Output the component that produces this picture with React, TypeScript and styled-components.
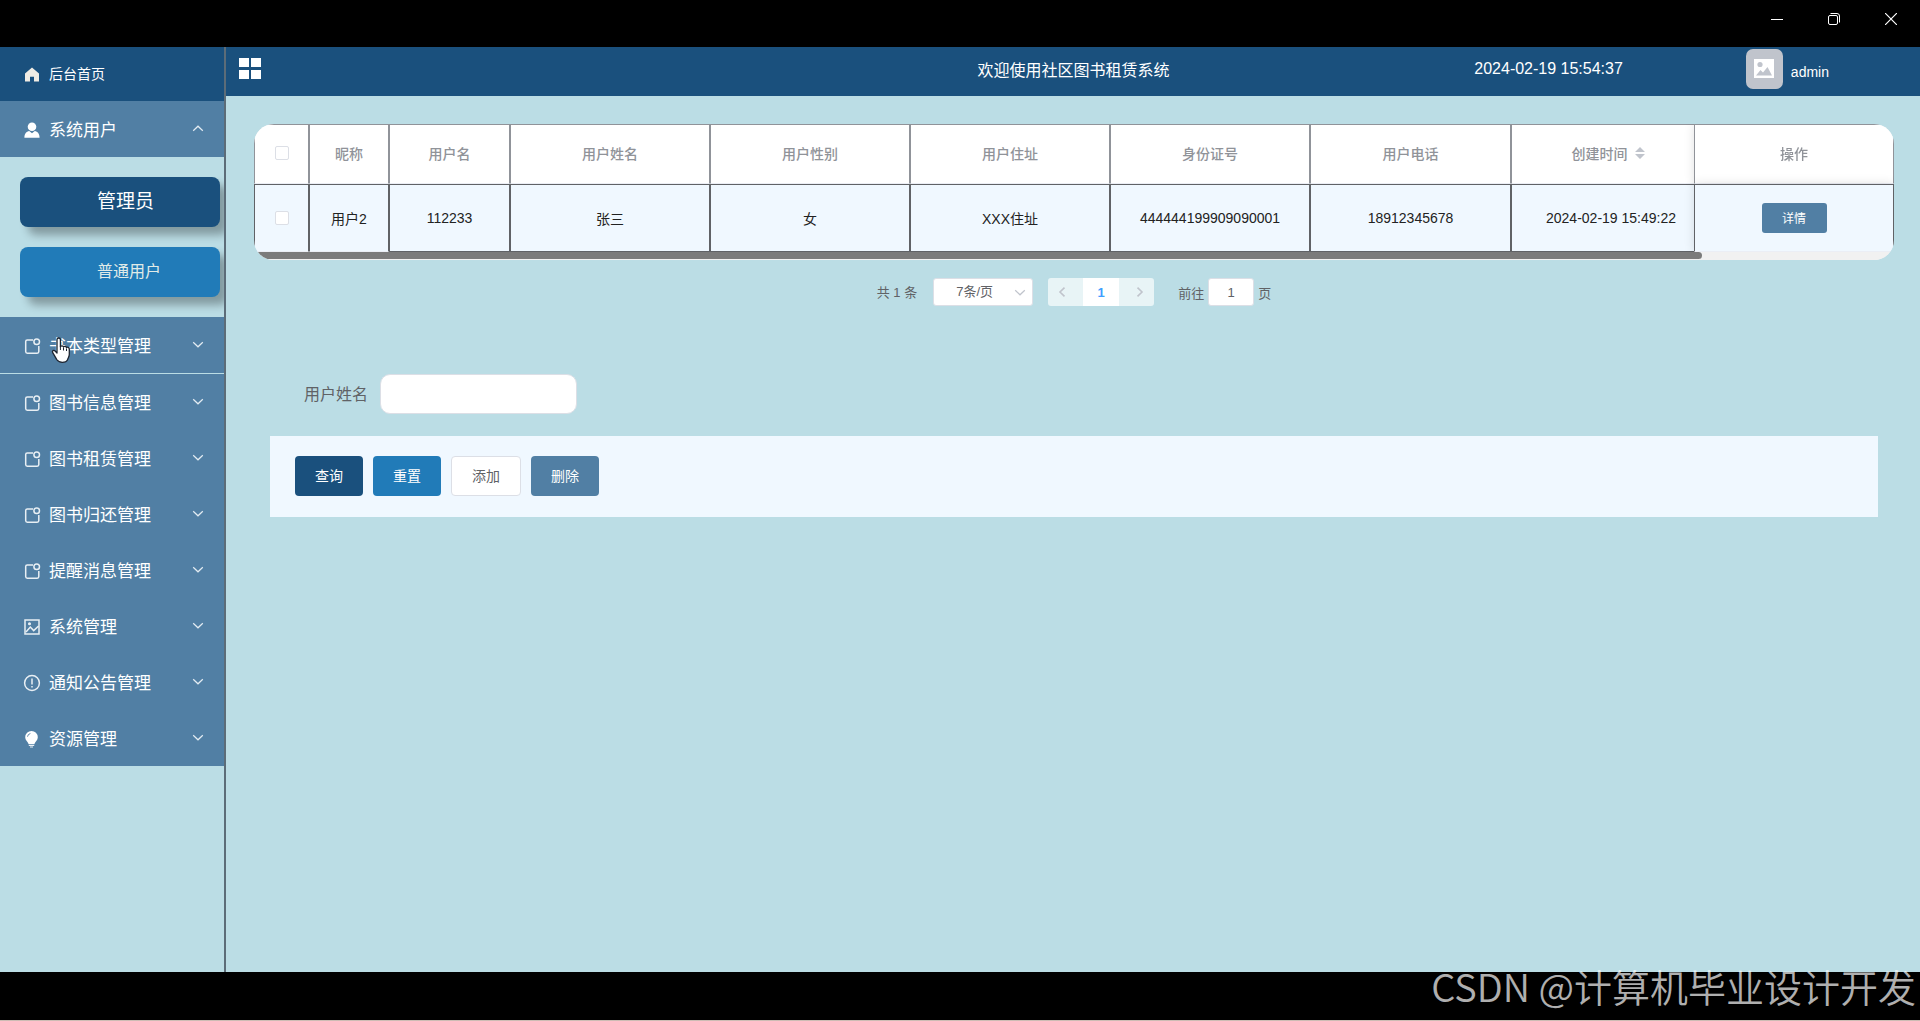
import React from 'react';
import styled, { createGlobalStyle, css } from 'styled-components';

const navy = '#1a507d';
const steel = '#517fa4';
const azure = '#217bb8';
const sky = '#bbdde5';
const ice = '#f0f8ff';
const sans = `"Liberation Sans", "Noto Sans CJK SC", sans-serif`;

const Global = createGlobalStyle`
  *, *::before, *::after { box-sizing: border-box; }
  body { margin: 0; background: #000; font-family: ${sans}; font-size: 14px; color: #606266; }
  button, input, select { font: inherit; color: inherit; margin: 0; }
  button { border: 0; padding: 0; background: none; cursor: pointer; }
  svg { display: block; flex: none; }
`;

const Window = styled.div`
  position: relative;
  display: flex;
  flex-direction: column;
  min-height: 100vh;
`;

const TitleBar = styled.header`
  display: flex;
  justify-content: flex-end;
  height: 47px;
  padding-right: 1px;
  background: #000;
`;

const WindowButton = styled.button`
  display: grid;
  place-items: center;
  width: 57px;
  height: 38px;
  color: #fff;
`;

const Body = styled.div`
  flex: 1;
  display: flex;
  background: ${sky};
`;

const Footer = styled.footer`
  height: 49px;
  background: #000;
  border-bottom: 1px solid #cdbcb4;
`;

const Watermark = styled.div`
  position: absolute;
  right: 4px;
  bottom: 7px;
  font: 38px/56px "Noto Sans CJK SC", sans-serif;
  font-weight: 350;
  color: rgba(255, 255, 255, 0.7);
  white-space: nowrap;
`;

const Sidebar = styled.nav`
  flex: none;
  width: 226px;
  border-right: 2px solid #5c6c78;
  overflow: hidden;
`;

const MenuLabel = styled.span`
  flex: 1;
  padding-bottom: 2px;
  text-align: left;
`;

const HomeLink = styled.a`
  display: flex;
  align-items: center;
  gap: 8px;
  height: 54px;
  padding-left: 23px;
  background: ${navy};
  color: #fff;
  text-decoration: none;
`;

const MenuButton = styled.button<{ $divided?: boolean }>`
  position: relative;
  display: flex;
  align-items: center;
  gap: 8px;
  width: 100%;
  height: ${p => (p.$divided ? 57 : 56)}px;
  padding: 0 20px 0 23px;
  background: ${steel};
  color: #fff;
  font-size: 17px;
  ${p => p.$divided && css`border-bottom: 1px solid ${sky};`}
`;

const IconSvg = styled.svg`
  margin-top: 2px;
`;

const SubMenu = styled.div`
  display: flex;
  flex-direction: column;
  gap: 20px;
  padding: 20px 4px 20px 20px;
`;

const SubLink = styled.a<{ $active?: boolean }>`
  height: 50px;
  padding-left: 77px;
  border-radius: 8px;
  background: ${p => (p.$active ? navy : azure)};
  box-shadow: 8px 8px 8px rgba(0, 0, 0, 0.3);
  color: ${p => (p.$active ? '#fff' : '#e0ebe8')};
  font-size: ${p => (p.$active ? 19 : 16)}px;
  line-height: 50px;
  text-decoration: none;
`;

const Pointer = styled.svg`
  position: absolute;
  left: 51px;
  top: 20px;
`;

const Content = styled.div`
  flex: 1;
  min-width: 0;
`;

const TopBar = styled.div`
  display: grid;
  grid-template-columns: 1fr auto 1fr;
  align-items: center;
  height: 49px;
  padding: 0 91px 6px 12px;
  background: ${navy};
  color: #fff;
  font-size: 16px;
`;

const CollapseButton = styled.button`
  justify-self: start;
`;

const TopTitle = styled.h1`
  margin: 0 0 0 80px;
  font-size: 16px;
  font-weight: 400;
`;

const TopRight = styled.div`
  display: flex;
  align-items: center;
  justify-content: flex-end;
  height: 40px;
`;

const User = styled.div`
  display: flex;
  align-items: center;
  gap: 8px;
  margin-left: 123px;
  font-size: 14px;
`;

const UserName = styled.span`
  padding-top: 6px;
`;

const Avatar = styled.div`
  display: grid;
  place-items: center;
  width: 37px;
  height: 40px;
  border-radius: 7px;
  background: #c0c4cc;
`;

const Main = styled.main`
  padding: 28px 26px 28px 28px;
`;

const TableCard = styled.div`
  overflow: hidden;
  border-radius: 20px;
  background: #f1f1f1;
`;

const TableView = styled.div`
  overflow: hidden;
`;

const Table = styled.table`
  width: 100%;
  min-width: 1657px;
  table-layout: fixed;
  border-collapse: separate;
  border-spacing: 0;
  text-align: center;
`;

const pinned = css`
  position: sticky;
  right: 0;
  box-shadow: 0 0 10px rgba(0, 0, 0, 0.12);
`;

const Th = styled.th<{ $pinned?: boolean }>`
  height: 60px;
  padding: 0 0 2px;
  background: #fff;
  border: 1px solid #909399;
  border-bottom-color: #ebeef5;
  color: #909399;
  font-weight: 500;
  ${p => p.$pinned && pinned}
`;

const Td = styled.td<{ $pinned?: boolean; $soft?: boolean }>`
  height: 68px;
  padding: 0;
  background: ${ice};
  border: 1px solid #606266;
  ${p => (p.$pinned || p.$soft) && css`border-bottom-color: #ebeef5;`}
  color: #222;
  ${p => p.$pinned && pinned}
`;

const CheckBox = styled.input`
  appearance: none;
  display: block;
  width: 14px;
  height: 14px;
  margin: 0 auto;
  border: 1px solid #dcdfe6;
  border-radius: 2px;
  background: #fff;
`;

const SortButton = styled.button`
  display: inline-flex;
  align-items: center;
  gap: 7px;
  padding-right: 6px;
`;

const ScrollTrack = styled.div`
  height: 8px;
  background: #f1f1f1;
`;

const ScrollThumb = styled.div`
  width: 88.3%;
  height: 7px;
  border-radius: 0 4px 4px 0;
  background: #7b7b7b;
`;

const DetailButton = styled.button`
  width: 65px;
  height: 30px;
  padding-bottom: 2px;
  border-radius: 3px;
  background: ${steel};
  color: #fff;
  font-size: 12px;
`;

const Pagination = styled.div`
  display: flex;
  align-items: center;
  justify-content: center;
  height: 28px;
  margin-top: 18px;
  font-size: 13px;
`;

const Total = styled.span`
  padding-bottom: 2px;
`;

const SizePicker = styled.div`
  position: relative;
  margin: 0 15px 0 16px;
  svg { position: absolute; right: 7px; top: 9px; pointer-events: none; }
`;

const SizeSelect = styled.select`
  appearance: none;
  display: block;
  width: 100px;
  height: 28px;
  padding: 0 22px 2px;
  border: 1px solid #dcdfe6;
  border-radius: 3px;
  background: #fff;
`;

const pageEdge = {
  left: css`padding-right: 8px; border-radius: 3px 0 0 3px;`,
  right: css`padding-left: 6px; border-radius: 0 3px 3px 0;`,
};

const PageButton = styled.button<{ $side?: 'left' | 'right' }>`
  display: grid;
  place-items: center;
  width: ${p => (p.$side ? 35 : 36)}px;
  height: 28px;
  background: ${p => (p.$side ? '#e8f4f6' : '#fff')};
  color: #409eff;
  font-weight: 700;
  ${p => p.$side && pageEdge[p.$side]}
`;

const Jump = styled.label`
  display: flex;
  align-items: center;
  gap: 4px;
  margin-left: 24px;
`;

const JumpInput = styled.input`
  width: 46px;
  height: 28px;
  padding: 0 3px;
  border: 1px solid #dcdfe6;
  border-radius: 3px;
  text-align: center;
`;

const SearchForm = styled.form`
  padding: 68px 16px 0;
`;

const SearchRow = styled.div`
  display: flex;
  align-items: center;
  gap: 12px;
  padding-left: 34px;
  font-size: 16px;
`;

const SearchLabel = styled.label`
  padding-bottom: 2px;
`;

const SearchInput = styled.input`
  width: 197px;
  height: 40px;
  padding: 0 15px;
  border: 1px solid #dcdfe6;
  border-radius: 10px;
  background: #fff;
`;

const ActionBar = styled.div`
  display: flex;
  gap: 10px;
  margin-top: 22px;
  padding: 20px 25px 21px;
  background: ${ice};
`;

const ActionButton = styled.button<{ $bg: string; $plain?: boolean }>`
  height: 40px;
  padding: 0 20px 2px;
  border-radius: 4px;
  background: ${p => p.$bg};
  color: ${p => (p.$plain ? '#606266' : '#fff')};
  ${p => p.$plain && css`border: 1px solid #dcdfe6;`}
`;

const Chevron = ({ up, color = '#e3ecf2' }: { up?: boolean; color?: string }) => (
  <svg width="12" height="12" viewBox="0 0 12 12" fill="none" stroke={color} strokeWidth="1.2">
    <path d={up ? 'M1.2 7.8 6 3.2l4.8 4.6' : 'M1.2 3.2 6 7.8l4.8-4.6'} />
  </svg>
);

type IconName = 'home' | 'user' | 'note' | 'picture' | 'warning' | 'bulb';

const MenuIcon = ({ name }: { name: IconName }) => (
  <IconSvg width="18" height="18" viewBox="0 0 18 18" fill="none" stroke="#e8eff4" strokeWidth="1.5">
    {name === 'home' && <path d="M9 1.500 2 7.400V15.500H7v-4.800h4v4.800h5V7.400Z" fill="#f0ece4" stroke="none" />}
    {name === 'user' && (
      <g fill="#fff" stroke="none">
        <circle cx="9" cy="5.800" r="4.300" />
        <path d="M1.400 16.800c0-4 2-6 4.800-6.700L9 12.200l2.800-2.100c2.800.7 4.800 2.700 4.800 6.700Z" />
      </g>
    )}
    {name === 'note' && (
      <>
        <path d="M10 3H4.300Q2.700 3 2.700 4.600V14.600Q2.700 16.200 4.300 16.200H14.200Q15.800 16.200 15.800 14.600V9" />
        <circle cx="13.700" cy="4.800" r="2.800" />
      </>
    )}
    {name === 'picture' && (
      <>
        <rect x="2" y="2" width="14" height="14" />
        <path d="m3 14 4.300-5 3.400 3.600L15.600 8" />
        <circle cx="6.500" cy="5.800" r="0.800" />
      </>
    )}
    {name === 'warning' && (
      <>
        <circle cx="9" cy="9" r="7.400" />
        <path d="M9 4.500v6M9 11.900v1.700" />
      </>
    )}
    {name === 'bulb' && (
      <>
        <path d="M8.500 1a6.300 6.300 0 0 0-6.300 6.300c0 3 2.300 4.200 3.500 6.900h5.600c1.200-2.700 3.500-3.900 3.500-6.900A6.300 6.300 0 0 0 8.500 1Z" fill="#fff" stroke="none" />
        <path d="M5.800 15.500h5.400M7 17h3" strokeWidth="1" />
        <path d="M4.500 6.700Q4.800 4.100 7.400 3.500" stroke={steel} strokeWidth="0.900" />
      </>
    )}
  </IconSvg>
);

const menu: { label: string; icon: IconName }[] = [
  { label: '书本类型管理', icon: 'note' },
  { label: '图书信息管理', icon: 'note' },
  { label: '图书租赁管理', icon: 'note' },
  { label: '图书归还管理', icon: 'note' },
  { label: '提醒消息管理', icon: 'note' },
  { label: '系统管理', icon: 'picture' },
  { label: '通知公告管理', icon: 'warning' },
  { label: '资源管理', icon: 'bulb' },
];

const columns = [
  { label: '昵称', width: 80, value: '用户2' },
  { label: '用户名', width: 121, value: '112233' },
  { label: '用户姓名', width: 200, value: '张三' },
  { label: '用户性别', width: 200, value: '女' },
  { label: '用户住址', width: 200, value: 'XXX住址' },
  { label: '身份证号', width: 200, value: '444444199909090001' },
  { label: '用户电话', width: 201, value: '18912345678' },
  { label: '创建时间', width: 200, value: '2024-02-19 15:49:22', sortable: true },
];

const HandPointer = () => (
  <Pointer width="20" height="27" viewBox="0 0 20 27" fill="#fff" stroke="#1c2430" strokeWidth="1.3" strokeLinejoin="round">
    <path d="M6 2.700c0-2.300 3.400-2.300 3.400 0v7c.4-1.300 2.900-1.200 3.100.3.600-1.100 2.800-.8 3 .6.800-.9 2.800-.4 2.800 1.300v5.600c0 2-1.200 3.400-1.800 5.200-.7 1.700-2.600 2.600-5.200 2.600-3 0-4.400-.8-5.600-2.800-1-1.800-2.800-4.800-4-6.800-1-1.800 1-3.200 2.400-1.700L6 16Z" />
    <path d="M9.400 9.500v3.500M12.500 10.500v3M15.500 11.500v2.500" strokeWidth="1" />
  </Pointer>
);

const DataTable = () => (
  <TableCard>
    <TableView>
      <Table>
        <colgroup>
          <col width={55} />
          {columns.map(c => <col key={c.label} width={c.width} />)}
          <col width={200} />
        </colgroup>
        <thead>
          <tr>
            <Th><CheckBox type="checkbox" aria-label="全选" /></Th>
            {columns.map(c => (
              <Th key={c.label}>
                {c.sortable ? (
                  <SortButton>
                    {c.label}
                    <svg width="10" height="12" viewBox="0 0 10 12" fill="#c0c4cc">
                      <path d="M5 0l5 5H0ZM5 12l5-5H0Z" />
                    </svg>
                  </SortButton>
                ) : c.label}
              </Th>
            ))}
            <Th $pinned>操作</Th>
          </tr>
        </thead>
        <tbody>
          <tr>
            <Td $soft><CheckBox type="checkbox" aria-label="选择用户2" /></Td>
            {columns.map((c, i) => <Td key={c.label} $soft={i === 0}>{c.value}</Td>)}
            <Td $pinned><DetailButton>详情</DetailButton></Td>
          </tr>
        </tbody>
      </Table>
    </TableView>
    <ScrollTrack><ScrollThumb /></ScrollTrack>
  </TableCard>
);

export default function App() {
  return (
    <Window>
      <Global />
      <TitleBar>
        <WindowButton aria-label="最小化">
          <svg width="12" height="12" viewBox="0 0 12 12" stroke="#fff"><path d="M0 6.500h12" /></svg>
        </WindowButton>
        <WindowButton aria-label="还原">
          <svg width="12" height="12" viewBox="0 0 12 12" fill="none" stroke="#fff">
            <rect x="0.500" y="2.500" width="9" height="9" rx="1.500" />
            <path d="M2.500.5h6.500a2.500 2.500 0 0 1 2.500 2.500v6.500" />
          </svg>
        </WindowButton>
        <WindowButton aria-label="关闭">
          <svg width="12" height="12" viewBox="0 0 12 12" stroke="#fff" strokeWidth="1.200"><path d="M0 0l12 12M12 0 0 12" /></svg>
        </WindowButton>
      </TitleBar>

      <Body>
        <Sidebar>
          <HomeLink href="#home">
            <MenuIcon name="home" />
            <MenuLabel>后台首页</MenuLabel>
          </HomeLink>
          <MenuButton>
            <MenuIcon name="user" />
            <MenuLabel>系统用户</MenuLabel>
            <Chevron up />
          </MenuButton>
          <SubMenu>
            <SubLink href="#admins" $active>管理员</SubLink>
            <SubLink href="#users">普通用户</SubLink>
          </SubMenu>
          {menu.map((m, i) => (
            <MenuButton key={m.label} $divided={i === 0}>
              <MenuIcon name={m.icon} />
              <MenuLabel>{m.label}</MenuLabel>
              <Chevron />
              {i === 0 && <HandPointer />}
            </MenuButton>
          ))}
        </Sidebar>

        <Content>
          <TopBar>
            <CollapseButton aria-label="折叠菜单">
              <svg width="24" height="22" viewBox="0 0 24 22" fill="#fff">
                <path d="M1 0h10v9H1ZM13 0h10v9H13ZM1 12h10v9H1ZM13 12h10v9H13Z" />
              </svg>
            </CollapseButton>
            <TopTitle>欢迎使用社区图书租赁系统</TopTitle>
            <TopRight>
              <time>2024-02-19 15:54:37</time>
              <User>
                <Avatar>
                  <svg width="20" height="19" viewBox="0 0 20 19">
                    <rect width="20" height="19" fill="#fff" />
                    <circle cx="6" cy="5.500" r="2.600" fill="#c0c4cc" />
                    <path d="M2 16.500 6.500 11l2.500 2.500L13.500 8l4.500 8.500Z" fill="#c0c4cc" />
                  </svg>
                </Avatar>
                <UserName>admin</UserName>
              </User>
            </TopRight>
          </TopBar>

          <Main>
            <DataTable />

            <Pagination>
              <Total>共 1 条</Total>
              <SizePicker>
                <SizeSelect aria-label="每页条数"><option>7条/页</option></SizeSelect>
                <Chevron color="#c0c4cc" />
              </SizePicker>
              <PageButton $side="left" aria-label="上一页">
                <svg width="8" height="10" viewBox="0 0 8 10" fill="none" stroke="#c0c4cc" strokeWidth="1.600"><path d="M6.500.7 2 5l4.500 4.300" /></svg>
              </PageButton>
              <PageButton>1</PageButton>
              <PageButton $side="right" aria-label="下一页">
                <svg width="8" height="10" viewBox="0 0 8 10" fill="none" stroke="#c0c4cc" strokeWidth="1.600"><path d="M1.500.7 6 5 1.500 9.300" /></svg>
              </PageButton>
              <Jump>
                前往
                <JumpInput type="text" defaultValue="1" />
                页
              </Jump>
            </Pagination>

            <SearchForm onSubmit={e => e.preventDefault()}>
              <SearchRow>
                <SearchLabel htmlFor="user-name">用户姓名</SearchLabel>
                <SearchInput id="user-name" type="text" />
              </SearchRow>
              <ActionBar>
                <ActionButton type="submit" $bg={navy}>查询</ActionButton>
                <ActionButton type="reset" $bg={azure}>重置</ActionButton>
                <ActionButton type="button" $bg="#fff" $plain>添加</ActionButton>
                <ActionButton type="button" $bg={steel}>删除</ActionButton>
              </ActionBar>
            </SearchForm>
          </Main>
        </Content>
      </Body>

      <Footer />
      <Watermark>CSDN @计算机毕业设计开发</Watermark>
    </Window>
  );
}
